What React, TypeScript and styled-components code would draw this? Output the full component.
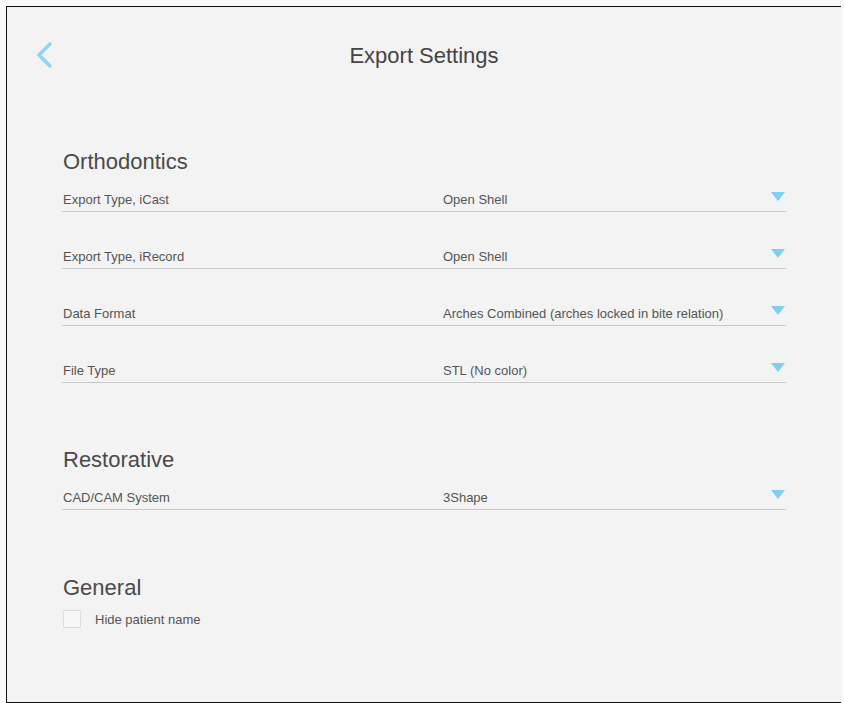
import styled, { createGlobalStyle } from "styled-components";

const GlobalStyle = createGlobalStyle`
    html, body {
        margin: 0;
        padding: 0;
        background-color: #fafafa;
        font-family: "Liberation Sans", Arial, sans-serif;
    }
`;

const Frame = styled.div`
    margin: 6px 0 0 6px;
    width: 834px;
    height: 695px;
    background-color: #f3f3f3;
    border: 1px solid #111;
    border-right: none;
    box-sizing: content-box;
    overflow: hidden;
`;

const Header = styled.div`
    display: flex;
    align-items: center;
    height: 50px;
    margin-top: 24px;
    padding-left: 29px;
`;

const BackButton = styled.button`
    display: flex;
    border: none;
    background: none;
    padding: 0;
    cursor: pointer;
`;

const Title = styled.h1`
    flex: 1;
    margin: 0 0 0 -46px;
    text-align: center;
    font-size: 22px;
    font-weight: normal;
    color: #444;
    padding-right: 1px;
`;

const Content = styled.div`
    padding: 0 55px 0 55px;
`;

const Section = styled.section<{ $gap: number }>`
    margin-top: ${(p) => p.$gap}px;
`;

const Heading = styled.h2`
    margin: 0 0 12px 1px;
    font-size: 22px;
    line-height: 26px;
    font-weight: normal;
    color: #4a4a4a;
`;

const Row = styled.div`
    display: flex;
    align-items: center;
    height: 24px;
    border-bottom: 1px solid #c9c9c9;
    font-size: 13px;
    color: #555;
    & + & {
        margin-top: 32px;
    }
`;

const Label = styled.span`
    width: 380px;
    padding-left: 1px;
`;

const Value = styled.span`
    flex: 1;
`;

const Caret = styled.span`
    align-self: flex-start;
    margin: 5px 1px 0 0;
    width: 0;
    height: 0;
    border-left: 7.5px solid transparent;
    border-right: 7.5px solid transparent;
    border-top: 9px solid #7fcff4;
`;

const CheckRow = styled.label`
    display: flex;
    align-items: center;
    gap: 14px;
    margin: -3px 0 0 1px;
    font-size: 13px;
    color: #555;
`;

const Box = styled.span`
    width: 16px;
    height: 16px;
    border: 1px solid #dcdcdc;
    border-radius: 2px;
    background-color: #f7f7f7;
`;

const ortho = [
    { label: "Export Type, iCast", value: "Open Shell" },
    { label: "Export Type, iRecord", value: "Open Shell" },
    { label: "Data Format", value: "Arches Combined (arches locked in bite relation)" },
    { label: "File Type", value: "STL (No color)" },
];

export default function App() {
    return (
        <>
            <GlobalStyle />
            <Frame>
                <Header>
                    <BackButton aria-label="Back">
                        <svg width="18" height="30" viewBox="0 0 18 30">
                            <polyline
                                points="14,3 3,14 14,25"
                                fill="none"
                                stroke="#8dd4f5"
                                strokeWidth="3.5"
                                strokeLinecap="round"
                                strokeLinejoin="round"
                            />
                        </svg>
                    </BackButton>
                    <Title>Export Settings</Title>
                </Header>
                <Content>
                    <Section $gap={68}>
                        <Heading>Orthodontics</Heading>
                        {ortho.map((r) => (
                            <Row key={r.label}>
                                <Label>{r.label}</Label>
                                <Value>{r.value}</Value>
                                <Caret />
                            </Row>
                        ))}
                    </Section>
                    <Section $gap={64}>
                        <Heading>Restorative</Heading>
                        <Row>
                            <Label>CAD/CAM System</Label>
                            <Value>3Shape</Value>
                            <Caret />
                        </Row>
                    </Section>
                    <Section $gap={65}>
                        <Heading>General</Heading>
                        <CheckRow>
                            <Box />
                            Hide patient name
                        </CheckRow>
                    </Section>
                </Content>
            </Frame>
        </>
    );
}
